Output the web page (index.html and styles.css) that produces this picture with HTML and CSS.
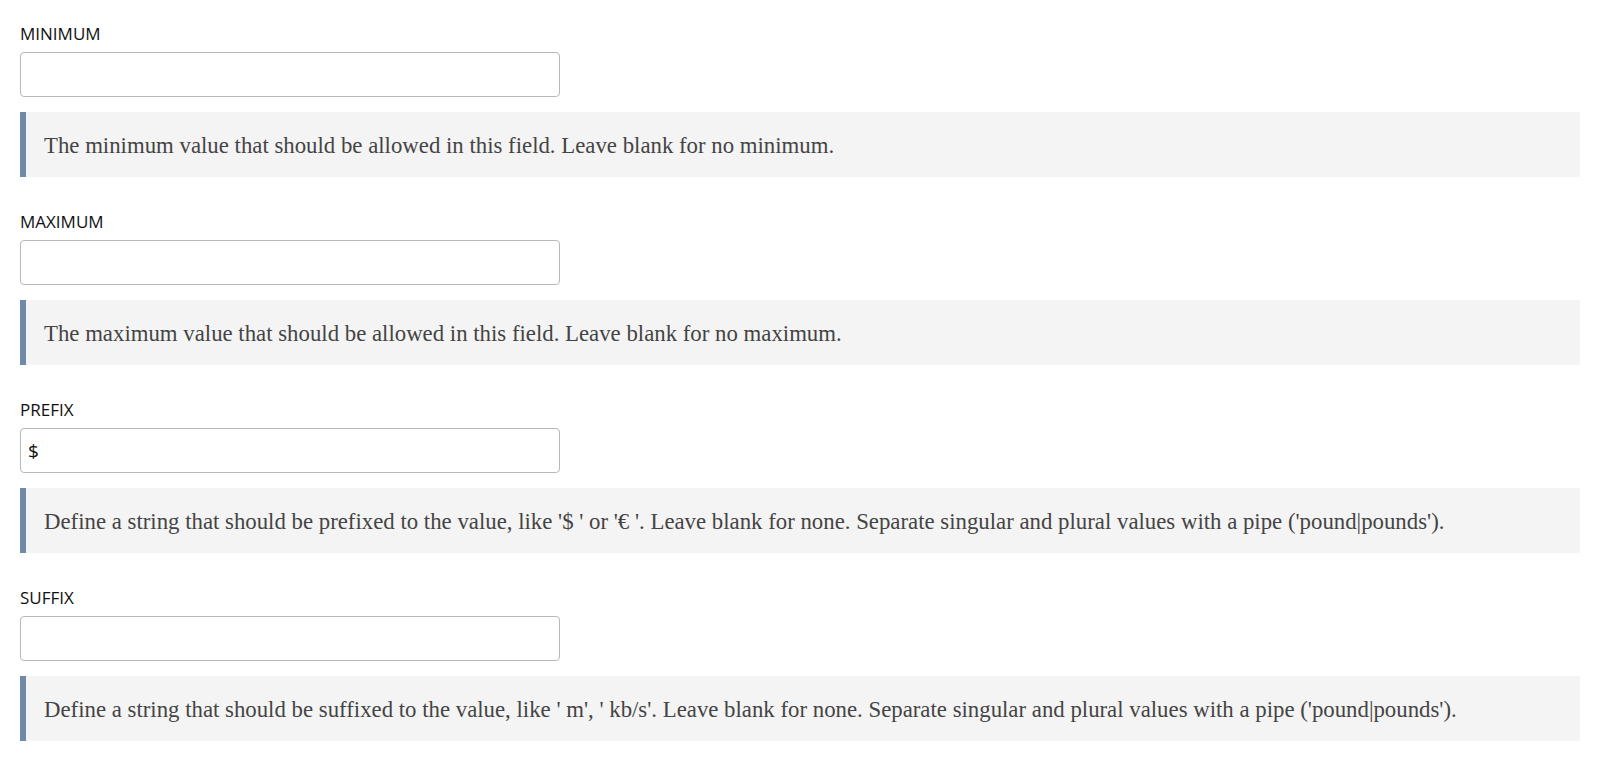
FILE: index.html
```html
<!DOCTYPE html>
<html lang="en">
<head>
    <meta charset="UTF-8">
    <title>Number field settings</title>
    <link rel="stylesheet" href="styles.css">
</head>
<body>
    <div class="field">
        <label for="min">Minimum</label>
        <input type="text" id="min">
        <div class="help">The minimum value that should be allowed in this field. Leave blank for no minimum.</div>
    </div>

    <div class="field">
        <label for="max">Maximum</label>
        <input type="text" id="max">
        <div class="help">The maximum value that should be allowed in this field. Leave blank for no maximum.</div>
    </div>

    <div class="field">
        <label for="prefix">Prefix</label>
        <input type="text" id="prefix" value="$">
        <div class="help">Define a string that should be prefixed to the value, like '$ ' or '€ '. Leave blank for none. Separate singular and plural values with a pipe ('pound|pounds').</div>
    </div>

    <div class="field">
        <label for="suffix">Suffix</label>
        <input type="text" id="suffix">
        <div class="help">Define a string that should be suffixed to the value, like ' m', ' kb/s'. Leave blank for none. Separate singular and plural values with a pipe ('pound|pounds').</div>
    </div>
</body>
</html>
```

FILE: styles.css
```css
body {
    font-family: "Open Sans", Arial, sans-serif;
    margin: 0;
    padding: 24px 20px 0;
    background-color: #fff;
}

.field {
    display: flex;
    flex-direction: column;
    align-items: flex-start;
    margin-bottom: 35px;
}

.field label {
    font-size: 17px;
    line-height: 20px;
    text-transform: uppercase;
    color: #111;
    margin-bottom: 8px;
}

.field input {
    box-sizing: border-box;
    width: 540px;
    height: 45px;
    padding: 0 7px;
    border: 1px solid #b8b8b8;
    border-radius: 4px;
    font-family: "Open Sans", Arial, sans-serif;
    font-size: 19px;
    color: #111;
}

.help {
    box-sizing: border-box;
    align-self: stretch;
    margin-top: 15px;
    min-height: 65px;
    padding: 20px 20px 18px 18px;
    background-color: #f4f4f4;
    border-left: 6px solid #7089a9;
    font-family: "Liberation Serif", "DejaVu Serif", serif;
    font-size: 22.8px;
    line-height: 27px;
    color: #444;
}
```
